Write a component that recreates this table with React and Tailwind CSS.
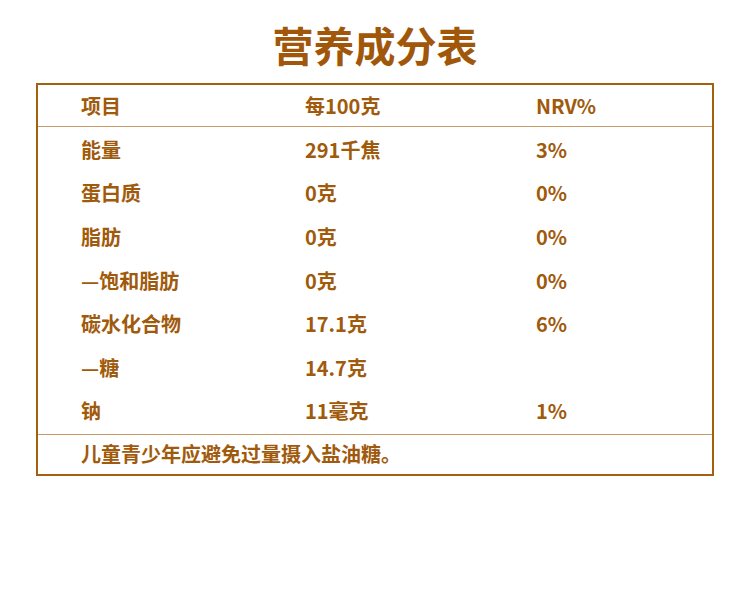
import React from 'react';

const rows = [
  ['能量', '291千焦', '3%'],
  ['蛋白质', '0克', '0%'],
  ['脂肪', '0克', '0%'],
  ['—饱和脂肪', '0克', '0%'],
  ['碳水化合物', '17.1克', '6%'],
  ['—糖', '14.7克', ''],
  ['钠', '11毫克', '1%'],
];

const Row = ({ cells, className = '' }) => (
  <div className={`grid grid-cols-[224px_231px_1fr] pl-[43px] items-center ${className}`}>
    {cells.map((c, i) => (
      <div key={i}>{c}</div>
    ))}
  </div>
);

export default function App() {
  return (
    <div
      className="w-[750px] h-[592px] bg-white text-[#a05a0c] font-bold"
      style={{ fontFamily: '"Noto Sans CJK SC", "Noto Sans", sans-serif' }}
    >
      <div className="h-[83px] pt-[19px] text-center text-[41px] leading-[50px] text-[#a0570a]">
        营养成分表
      </div>
      <div className="ml-[36px] w-[678px] border-2 border-[#a3600f] text-[20px] leading-[28px]">
        <Row cells={['项目', '每100克', 'NRV%']} className="h-[42px] border-b border-[#c79a66]" />
        <div className="py-[1px]">
          {rows.map((r, i) => (
            <Row key={i} cells={r} className="h-[43.6px]" />
          ))}
        </div>
        <div className="h-[40px] border-t border-[#c79a66] pl-[43px] pb-[1px] flex items-center">
          儿童青少年应避免过量摄入盐油糖。
        </div>
      </div>
    </div>
  );
}
